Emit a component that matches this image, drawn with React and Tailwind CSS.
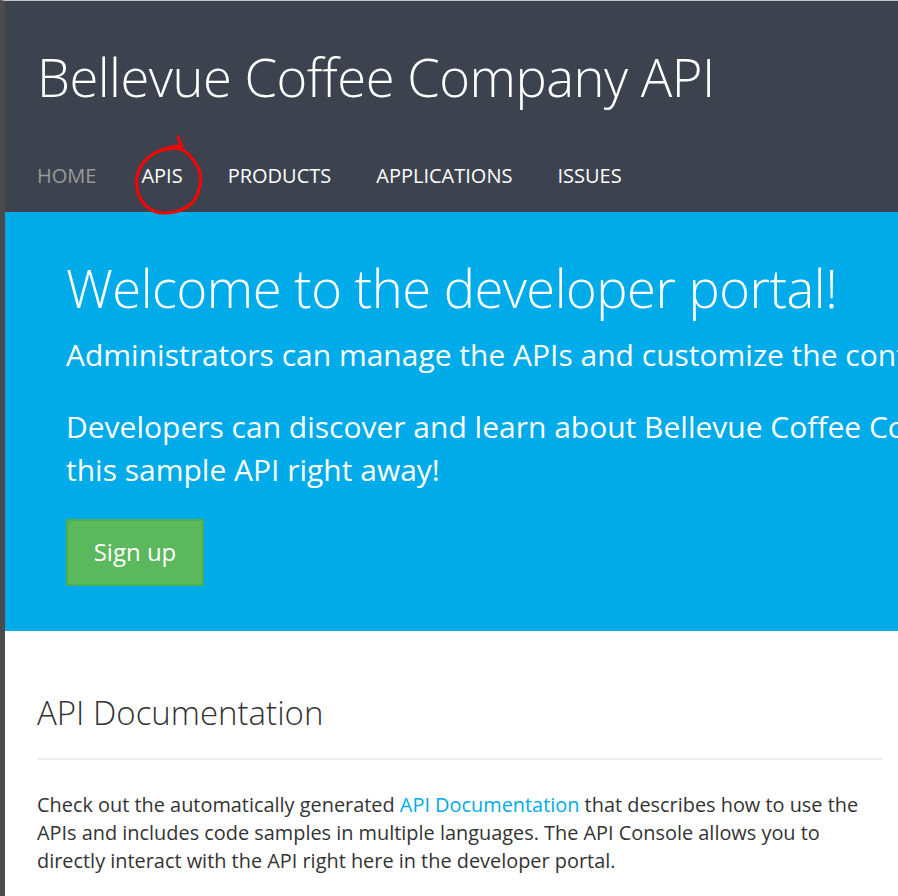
import React from 'react';

const navItems = [
  { label: 'HOME', active: true },
  { label: 'APIS' },
  { label: 'PRODUCTS' },
  { label: 'APPLICATIONS' },
  { label: 'ISSUES' },
];

const Annotation = () => (
  <svg
    className="absolute top-0 left-0 pointer-events-none"
    width="898"
    height="896"
    viewBox="0 0 898 896"
  >
    <path
      d="M173,136 C174,139 175,142 177,145 C170,145 159,147 148,153 C136,161 130,172 132,187 C134,201 145,213 161,212 C177,211 189,204 193,192 C197,180 196,169 190,162 C185,154 180,148 171,147 C164,147 157,149 152,151"
      fill="none"
      stroke="#ff0000"
      strokeWidth="3"
      strokeLinecap="round"
      strokeLinejoin="round"
    />
  </svg>
);

const App = () => {
  return (
    <div
      className="relative w-[898px] h-[896px] overflow-hidden bg-white border-t border-[#c4c4c4] border-l-[5px] border-l-[#4b4b4b]"
      style={{ fontFamily: '"Open Sans", "Noto Sans", Arial, sans-serif' }}
    >
      <header className="bg-[#3d434e] h-[211px] pl-8 flex flex-col">
        <h1 className="text-white font-light text-[52.5px] leading-none pt-[50px] whitespace-nowrap tracking-[-0.5px]">
          Bellevue Coffee Company API
        </h1>
        <nav className="flex items-center gap-[45px] mt-[62px] text-[20px] leading-none">
          {navItems.map((item) => (
            <a
              key={item.label}
              href="#"
              className={item.active ? 'text-[#9a9a9a]' : 'text-white'}
            >
              {item.label}
            </a>
          ))}
        </nav>
      </header>

      <section className="bg-[#00abe9] h-[419px] pl-[61px] pt-[50px] text-white whitespace-nowrap">
        <h2 className="font-light text-[52.5px] leading-none tracking-[-0.5px]">
          Welcome to the developer portal!
        </h2>
        <p className="text-[30px] leading-[43px] mt-[18px]">
          Administrators can manage the APIs and customize the content of this portal.
        </p>
        <p className="text-[30px] leading-[43px] mt-[29px]">
          Developers can discover and learn about Bellevue Coffee Company API, obtain access and try
          <br />
          this sample API right away!
        </p>
        <button className="mt-[28px] w-[138px] h-[67px] bg-[#5cb85c] border-2 border-[#4cae4c] text-white text-[24px]">
          Sign up
        </button>
      </section>

      <main className="pl-8 pr-[15px] pt-[65px]">
        <h3 className="text-[#333333] font-light text-[33px] leading-none pb-[29px] border-b-2 border-[#eeeeee]">
          API Documentation
        </h3>
        <p className="text-[#333333] text-[19.9px] leading-[28px] mt-[31px] whitespace-nowrap">
          Check out the automatically generated{' '}
          <a href="#" className="text-[#00abe9]">API Documentation</a> that describes how to use the
          <br />
          APIs and includes code samples in multiple languages. The API Console allows you to
          <br />
          directly interact with the API right here in the developer portal.
        </p>
      </main>

      <Annotation />
    </div>
  );
};

export default App;
